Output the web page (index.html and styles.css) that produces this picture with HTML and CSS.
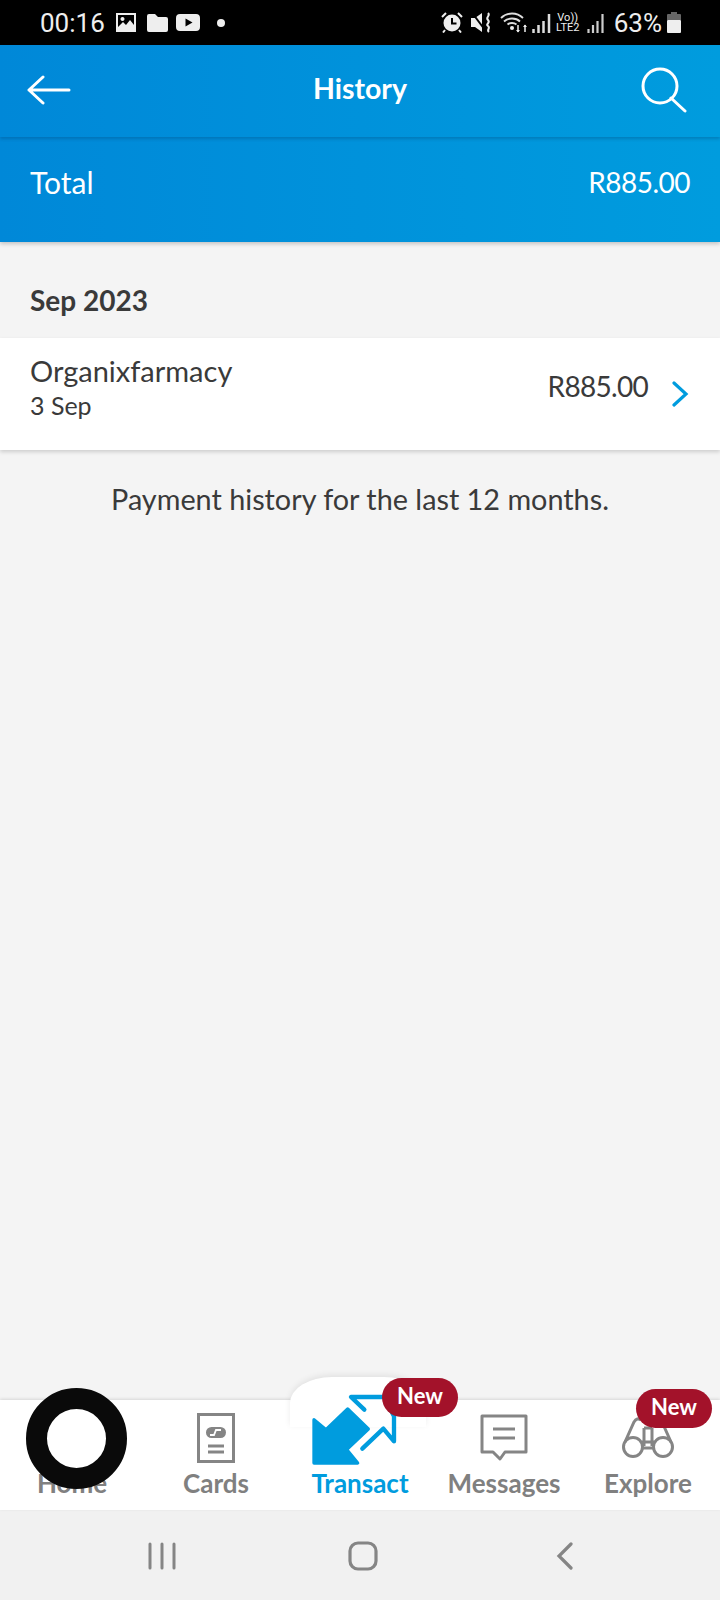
FILE: index.html
```html
<!DOCTYPE html>
<html lang="en">
<head>
<meta charset="utf-8">
<title>History</title>
<link rel="stylesheet" href="styles.css">
</head>
<body>
<div class="screen">
  <div class="status">
    <span class="time">00:16</span>
    <svg class="si-img" width="20" height="19" viewBox="0 0 20 19"><path fill="#eee" fill-rule="evenodd" d="M0 0h20v19H0zM2 2v12l5-5 3 3 4-5 4 5V2zM6.500 4a2 2 0 1 0 .01 0z"/></svg>
    <svg class="si-folder" width="21" height="18" viewBox="0 0 21 18"><path fill="#eee" d="M2 0h6l3 3h8a2 2 0 0 1 2 2v11a2 2 0 0 1-2 2H2a2 2 0 0 1-2-2V2a2 2 0 0 1 2-2z"/></svg>
    <svg class="si-yt" width="24" height="17" viewBox="0 0 24 17"><path fill="#eee" fill-rule="evenodd" d="M4 0h16a4 4 0 0 1 4 4v9a4 4 0 0 1-4 4H4a4 4 0 0 1-4-4V4a4 4 0 0 1 4-4zM9.500 4.500v8l7-4z"/></svg>
    <span class="si-dot"></span>
    <span class="status-spacer"></span>
    <svg class="si-alarm" width="22" height="21" viewBox="0 0 22 21"><circle cx="11" cy="11" r="8.500" fill="#eee"/><path d="M11 6v5.500h4.500" fill="none" stroke="#000" stroke-width="2"/><path d="M1 5l4-4M21 5l-4-4M4 18l-2 2.500M18 18l2 2.500" stroke="#eee" stroke-width="2"/></svg>
    <svg class="si-mute" width="21" height="21" viewBox="0 0 21 21"><path fill="#eee" d="M0 6h4l7-5v19l-7-5H0z"/><path d="M2 2l12 16" stroke="#000" stroke-width="2"/><path d="M17 1c3 3-3 4 0 7s-3 4 0 6 -2 4 1 6" fill="none" stroke="#eee" stroke-width="2"/></svg>
    <svg class="si-wifi" width="27" height="21" viewBox="0 0 27 21"><g fill="none" stroke="#ddd" stroke-width="1.800"><path d="M1 6c6-6 16-6 22 0"/><path d="M4 9.500c4-4 12-4 16 0"/><path d="M7.500 12.500c2.500-2 6.500-2 9 0"/></g><circle cx="12" cy="16" r="2" fill="#eee"/><path d="M18 13v7M25 20v-7" stroke="#eee" stroke-width="1.500"/><path d="M16 18l2 2.500 2-2.500zM23 15l2-2.500 2 2.500z" fill="#eee"/></svg>
    <svg class="si-sig1" width="19" height="20" viewBox="0 0 19 20"><path d="M1.500 20v-4M6.500 20v-8M11.500 20v-12M17 20V1" stroke="#ddd" stroke-width="2.500"/></svg>
    <span class="volte"><span>Vo))</span><span>LTE2</span></span>
    <svg class="si-sig2" width="17" height="20" viewBox="0 0 17 20"><path d="M1.500 20v-4M6 20v-8M10.500 20v-12M15.500 20V1" stroke="#ccc" stroke-width="2.200"/></svg>
    <span class="pct">63%</span>
    <svg class="si-batt" width="14" height="21" viewBox="0 0 14 21"><path fill="#666" d="M4 0h6v2h3a1 1 0 0 1 1 1v5H0V3a1 1 0 0 1 1-1h3z"/><rect y="8" width="14" height="13" rx="1" fill="#eee"/></svg>
  </div>

  <header class="appbar">
    <svg class="back" width="44" height="30" viewBox="0 0 44 30"><path d="M16 2L2 15l14 13M2 15h40" fill="none" stroke="#fff" stroke-width="3" stroke-linecap="round" stroke-linejoin="round"/></svg>
    <h1 class="title">History</h1>
    <svg class="search" width="46" height="46" viewBox="0 0 46 46"><circle cx="19" cy="19" r="17" fill="none" stroke="#fff" stroke-width="3"/><path d="M30 31l14 13" fill="none" stroke="#fff" stroke-width="3" stroke-linecap="round"/></svg>
  </header>
  <div class="total">
    <span class="total-label">Total</span>
    <span class="total-value">R885.00</span>
  </div>

  <main class="content">
    <h2 class="month">Sep 2023</h2>
    <div class="row">
      <div class="row-text">
        <div class="merchant">Organixfarmacy</div>
        <div class="date">3 Sep</div>
      </div>
      <div class="amount">R885.00</div>
      <svg class="chev" width="18" height="26" viewBox="0 0 18 26"><path d="M3 2l12 11L3 24" fill="none" stroke="#009cde" stroke-width="3.200" stroke-linecap="round"/></svg>
    </div>
    <p class="note">Payment history for the last 12 months.</p>
  </main>

  <nav class="tabs">
    <div class="tab">
      <span class="tab-icon"></span>
      <span class="tab-label">Home</span>
    </div>
    <div class="tab">
      <span class="tab-icon">
        <svg width="40" height="52" viewBox="0 0 40 52"><rect x="2.500" y="2.500" width="35" height="47" fill="none" stroke="#858585" stroke-width="3"/><rect x="10" y="15" width="20" height="11" rx="5.500" fill="#858585"/><path d="M25 18h-5l-2 5h-4" fill="none" stroke="#fff" stroke-width="1.800"/><path d="M12 34h16M12 40h16" stroke="#858585" stroke-width="3"/></svg>
      </span>
      <span class="tab-label">Cards</span>
    </div>
    <div class="tab tab-active">
      <span class="tab-bump"></span>
      <span class="tab-icon">
        <svg class="ic-transact" width="90" height="75" viewBox="120 100 270 225"><path fill="#009cde" stroke="#009cde" stroke-width="10" stroke-linejoin="round" d="M132 180l36 30 65-62 62 60-65 62 33 40H132z"/><path fill="none" stroke="#009cde" stroke-width="13" stroke-linecap="round" stroke-linejoin="round" d="M283 150l-40-38h100l29 58v75l-32-38-63 60"/></svg>
      </span>
      <span class="tab-label">Transact</span>
      <span class="badge badge-transact">New</span>
    </div>
    <div class="tab">
      <span class="tab-icon">
        <svg width="48" height="48" viewBox="0 0 48 48"><path d="M2 2h44v36H25l-5 7-7-7H2z" fill="none" stroke="#858585" stroke-width="3" stroke-linejoin="round"/><path d="M13 15h22M13 24h22" stroke="#858585" stroke-width="3"/></svg>
      </span>
      <span class="tab-label">Messages</span>
    </div>
    <div class="tab">
      <span class="tab-icon">
        <svg width="52" height="44" viewBox="0 0 52 44"><g fill="none" stroke="#858585" stroke-width="3"><circle cx="11" cy="31" r="9.500"/><circle cx="41" cy="31" r="9.500"/><path d="M20 26h12M20 32h12M3 26L12 6q3-5 7-2M49 26L40 6q-3-5-7-2M22 12v18M30 12v18M22 12h8"/></g></svg>
      </span>
      <span class="tab-label">Explore</span>
      <span class="badge badge-explore">New</span>
    </div>
  </nav>

  <div class="sysnav">
    <svg width="28" height="28" viewBox="0 0 28 28"><path d="M2 2v24M14 2v24M26 2v24" stroke="#858585" stroke-width="3" stroke-linecap="round"/></svg>
    <svg width="30" height="30" viewBox="0 0 30 30"><rect x="2" y="2" width="26" height="26" rx="8" fill="none" stroke="#858585" stroke-width="3.200"/></svg>
    <svg width="18" height="28" viewBox="0 0 18 28"><path d="M15 2L3 14l12 12" fill="none" stroke="#858585" stroke-width="3.200" stroke-linecap="round"/></svg>
  </div>

  <div class="bubble"></div>
</div>
</body>
</html>
```

FILE: styles.css
```css
* { box-sizing: border-box; }
html, body { margin: 0; padding: 0; }
body { font-family: "Lato", "Noto Sans", sans-serif; background: #f4f4f4; color: #3a3a3a; }
.screen { position: relative; width: 720px; height: 1600px; display: flex; flex-direction: column; overflow: hidden; }

.status { height: 45px; background: #000; color: #eee; display: flex; align-items: center; padding: 0 39px 0 40px; flex: none; font-family: "Roboto", sans-serif; }
.time { font-size: 26px; width: 66px; margin-right: 10px; }
.si-img { margin-right: 11px; }
.si-folder { margin-right: 8px; }
.si-yt { margin-right: 17px; }
.si-dot { width: 8px; height: 8px; border-radius: 50%; background: #eee; }
.status-spacer { flex: 1; }
.si-alarm { margin-right: 8px; }
.si-mute { margin-right: 8px; }
.si-wifi { margin-right: 5px; }
.si-sig1 { margin-right: 4px; }
.volte { width: 26px; margin-right: 6px; display: flex; flex-direction: column; align-items: center; font-size: 11px; line-height: 10px; }
.si-sig2 { margin-right: 10px; }
.pct { font-size: 26px; margin-right: 5px; }

.appbar { height: 92px; flex: none; position: relative; z-index: 2; display: flex; align-items: center; justify-content: space-between; padding: 0 33px 3px 27px; background: linear-gradient(90deg, #0088d8, #009cde); box-shadow: 0 2px 3px rgba(0, 60, 110, .3); }
.title { position: absolute; left: 0; right: 0; top: 26px; margin: 0; text-align: center; font-size: 28.500px; line-height: 34px; font-weight: 700; color: #fff; }
.total { height: 105px; flex: none; position: relative; z-index: 1; display: flex; justify-content: space-between; padding: 28px 30px 0; line-height: 34px; color: #fff; background: linear-gradient(90deg, #0088d8, #009cde); box-shadow: 0 2px 4px rgba(0, 0, 0, .2); }
.total-label { font-size: 30px; }
.total-value { font-size: 28px; letter-spacing: -.5px; }

.content { flex: 1; display: flex; flex-direction: column; }
.month { margin: 0; height: 96px; padding: 41px 30px 0; font-size: 28px; line-height: 34px; font-weight: 700; color: #3a3a3a; }
.row { height: 112px; background: #fff; display: flex; align-items: center; padding: 0 31px 0 30px; box-shadow: 0 2px 4px rgba(0, 0, 0, .16); }
.row-text { flex: 1; margin-top: -15px; }
.merchant { font-size: 29px; line-height: 36px; }
.date { font-size: 25px; line-height: 32px; }
.amount { font-size: 28px; line-height: 36px; letter-spacing: -.7px; margin: -16px 23px 0 0; }
.note { margin: 31px 0 0; text-align: center; font-size: 28.800px; line-height: 36px; }

.tabs { height: 110px; flex: none; background: #fff; display: grid; grid-template-columns: repeat(5, 144px); position: relative; box-shadow: 0 -1px 3px rgba(0, 0, 0, .12); }
.tab { position: relative; display: flex; flex-direction: column; align-items: center; }
.tab-icon { height: 70px; padding-top: 6px; display: flex; align-items: center; justify-content: center; position: relative; }
.tab-label { font-size: 26px; line-height: 26px; font-weight: 700; color: #808080; position: relative; }
.tab-active .tab-label { color: #009cde; }
.tab-bump { position: absolute; left: 2px; top: -23px; width: 136px; height: 50px; background: #fff; border-radius: 42px 42px 0 0 / 26px 26px 0 0; box-shadow: 0 -2px 6px rgba(0, 0, 0, .08); }
.ic-transact { margin: -16px 0 0 -10px; }
.badge { position: absolute; width: 76px; height: 39px; border-radius: 20px; background: #a3122a; color: #fff; font-size: 22px; line-height: 36px; font-weight: 700; text-align: center; }
.badge-transact { left: 94px; top: -22px; }
.badge-explore { left: 60px; top: -11px; }

.sysnav { height: 90px; flex: none; background: #f1f1f1; display: grid; grid-template-columns: 1fr 1fr 1fr; justify-items: center; align-items: center; padding: 2px 54px 0 61px; }

.bubble { position: absolute; left: 26px; top: 1388px; width: 101px; height: 101px; border-radius: 50%; border: 21px solid #0a0a0a; background: #fff; }
```
